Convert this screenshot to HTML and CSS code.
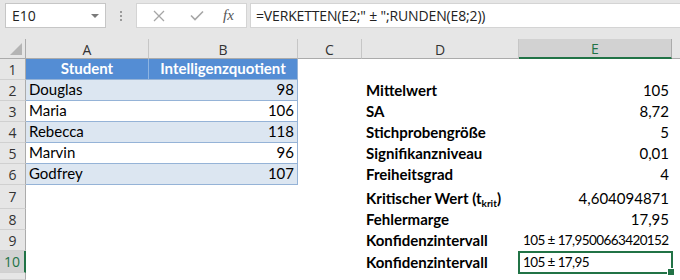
FILE: index.html
```html
<!DOCTYPE html>
<html lang="de">
<head>
  <meta charset="UTF-8" />
  <title>Konfidenzintervall</title>
  <link rel="stylesheet" href="styles.css">
</head>
<body>
  <div class="formula-bar">
    <div class="name-box">
      <span>E10</span>
      <span class="caret"></span>
    </div>
    <div class="grip"><i></i><i></i><i></i></div>
    <div class="fx-buttons">
      <svg width="12" height="12" viewBox="0 0 12 12"><path d="M1 1 L11 11 M11 1 L1 11" stroke="#a6a6a6" stroke-width="1.3" fill="none"/></svg>
      <svg width="14" height="11" viewBox="0 0 14 11"><path d="M1 5.5 L5 9.5 L13 1.5" stroke="#a6a6a6" stroke-width="1.6" fill="none"/></svg>
      <span class="fx">fx</span>
    </div>
    <div class="formula-input">=VERKETTEN(E2;" ± ";RUNDEN(E8;2))</div>
  </div>

  <div class="sheet">
    <!-- Spaltenköpfe -->
    <div class="corner"><span class="tri"></span></div>
    <div class="col-head">A</div>
    <div class="col-head">B</div>
    <div class="col-head">C</div>
    <div class="col-head">D</div>
    <div class="col-head active">E</div>
    <div class="col-head last"></div>

    <!-- Zeile 1 -->
    <div class="row-head">1</div>
    <div class="cell t-head sep">Student</div>
    <div class="cell t-head">Intelligenzquotient</div>
    <div class="cell"></div><div class="cell"></div><div class="cell"></div><div class="cell"></div>

    <div class="row-head">2</div>
    <div class="cell t-body band">Douglas</div>
    <div class="cell t-body band num edge">98</div>
    <div class="cell"></div>
    <div class="cell label">Mittelwert</div>
    <div class="cell num">105</div>
    <div class="cell"></div>

    <div class="row-head">3</div>
    <div class="cell t-body">Maria</div>
    <div class="cell t-body num edge">106</div>
    <div class="cell"></div>
    <div class="cell label">SA</div>
    <div class="cell num">8,72</div>
    <div class="cell"></div>

    <div class="row-head">4</div>
    <div class="cell t-body band">Rebecca</div>
    <div class="cell t-body band num edge">118</div>
    <div class="cell"></div>
    <div class="cell label">Stichprobengröße</div>
    <div class="cell num">5</div>
    <div class="cell"></div>

    <div class="row-head">5</div>
    <div class="cell t-body">Marvin</div>
    <div class="cell t-body num edge">96</div>
    <div class="cell"></div>
    <div class="cell label">Signifikanzniveau</div>
    <div class="cell num">0,01</div>
    <div class="cell"></div>

    <div class="row-head">6</div>
    <div class="cell t-body band">Godfrey</div>
    <div class="cell t-body band num edge">107</div>
    <div class="cell"></div>
    <div class="cell label">Freiheitsgrad</div>
    <div class="cell num">4</div>
    <div class="cell"></div>

    <div class="row-head">7</div>
    <div class="cell"></div><div class="cell"></div><div class="cell"></div>
    <div class="cell label"><span>Kritischer Wert (t<sub>krit</sub>)</span></div>
    <div class="cell num">4,604094871</div>
    <div class="cell"></div>

    <div class="row-head">8</div>
    <div class="cell"></div><div class="cell"></div><div class="cell"></div>
    <div class="cell label">Fehlermarge</div>
    <div class="cell num">17,95</div>
    <div class="cell"></div>

    <div class="row-head">9</div>
    <div class="cell"></div><div class="cell"></div><div class="cell"></div>
    <div class="cell label">Konfidenzintervall</div>
    <div class="cell text">105 ± 17,9500663420152</div>
    <div class="cell"></div>

    <div class="row-head active">10</div>
    <div class="cell"></div><div class="cell"></div><div class="cell"></div>
    <div class="cell label">Konfidenzintervall</div>
    <div class="cell text selected">105 ± 17,95</div>
    <div class="cell"></div>

    <div class="row-head"></div>
  </div>
</body>
</html>
```

FILE: styles.css
```css
body {
  margin: 0;
  width: 680px;
  height: 280px;
  overflow: hidden;
  background-color: #fff;
  font-family: 'Lato', 'Liberation Sans', sans-serif;
}

.formula-bar {
  display: flex;
  align-items: flex-start;
  height: 39px;
  box-sizing: border-box;
  padding: 3px 0 0 5px;
  background-color: #e6e6e6;
  font-family: 'Open Sans', 'Noto Sans', sans-serif;
  font-size: 14px;
  color: #222;
}

.name-box {
  width: 101px;
  height: 25px;
  box-sizing: border-box;
  border: 1px solid #c6c6c6;
  background-color: #fff;
  display: flex;
  align-items: center;
  justify-content: space-between;
  padding: 0 6px 0 6px;
}

.caret {
  width: 0;
  height: 0;
  border-left: 4px solid transparent;
  border-right: 4px solid transparent;
  border-top: 4px solid #7a7a7a;
}

.grip {
  width: 30px;
  height: 25px;
  display: flex;
  flex-direction: column;
  align-items: center;
  justify-content: center;
  gap: 2px;
}

.grip i {
  width: 2px;
  height: 2px;
  background-color: #9a9a9a;
}

.fx-buttons {
  width: 111px;
  height: 25px;
  box-sizing: border-box;
  border: 1px solid #d4d4d4;
  background-color: #fff;
  display: flex;
  align-items: center;
  padding: 0 10px 0 16px;
}

.fx-buttons svg:first-child {
  margin-right: 25px;
}

.fx-buttons svg:nth-child(2) {
  margin-right: 19px;
}

.fx {
  font-family: 'Liberation Serif', serif;
  font-style: italic;
  font-size: 15px;
  color: #555;
}

.formula-input {
  flex: 1;
  margin-left: 3px;
  height: 25px;
  box-sizing: border-box;
  border: 1px solid #d4d4d4;
  border-right: none;
  background-color: #fff;
  padding: 1px 0 0 5px;
  line-height: 22px;
  white-space: nowrap;
  letter-spacing: -0.15px;
}

.sheet {
  display: grid;
  grid-template-columns: 26px 123px 149px 64px 157px 153px 1fr;
  grid-template-rows: 20px repeat(6, 21px) 24px 21px 21px 22px 1fr;
  height: 241px;
}

.corner,
.col-head,
.row-head {
  background-color: #e6e6e6;
  box-sizing: border-box;
  font-family: 'Open Sans', 'Noto Sans', sans-serif;
  font-size: 14px;
  color: #333;
  display: flex;
  align-items: center;
  justify-content: center;
}

.corner {
  border-right: 1px solid #ababab;
  border-bottom: 1px solid #ababab;
  position: relative;
}

.tri {
  position: absolute;
  right: 3px;
  bottom: 3px;
  width: 0;
  height: 0;
  border-left: 12px solid transparent;
  border-bottom: 12px solid #b4b4b4;
}

.col-head {
  border-right: 1px solid #c6c6c6;
  border-bottom: 1px solid #ababab;
  padding-top: 1px;
}

.col-head.active {
  background-color: #d2d2d2;
  color: #217346;
  border-bottom: 2px solid #217346;
  border-right-color: #ababab;
}

.col-head.last {
  border-right: none;
}

.row-head {
  border-right: 1px solid #ababab;
  border-bottom: 1px solid #d0d0d0;
}

.row-head.active {
  background-color: #d2d2d2;
  color: #217346;
  border-right: 2px solid #217346;
}

.cell {
  box-sizing: border-box;
  display: flex;
  align-items: flex-end;
  padding: 0 3px 1px 3px;
  line-height: 19px;
  font-size: 15px;
  color: #000;
  white-space: nowrap;
}

.num {
  justify-content: flex-end;
}

.text {
  font-size: 13.5px;
  letter-spacing: -0.6px;
  padding-left: 4px;
}

.label {
  font-weight: bold;
  padding-left: 4px;
}

.label sub {
  font-size: 10px;
  line-height: 0;
  vertical-align: -3px;
}

.t-head {
  background-color: #548dd4;
  color: #fff;
  font-weight: bold;
  justify-content: center;
  border-bottom: 1px solid #95b3d7;
  border-right: 1px solid #95b3d7;
}

.t-head.sep {
  border-right: 1px solid #8db4e2;
}

.t-body {
  border-bottom: 1px solid #95b3d7;
}

.t-body.edge {
  border-right: 1px solid #95b3d7;
}

.band {
  background-color: #dce6f1;
}

.selected {
  position: relative;
}

.selected::after {
  content: '';
  position: absolute;
  left: -1px;
  right: -1px;
  top: 0;
  bottom: -1px;
  border: 2px solid #217346;
}

.selected::before {
  content: '';
  position: absolute;
  right: -3px;
  bottom: -3px;
  width: 6px;
  height: 6px;
  background-color: #217346;
  border: 1px solid #fff;
  z-index: 1;
}
```
